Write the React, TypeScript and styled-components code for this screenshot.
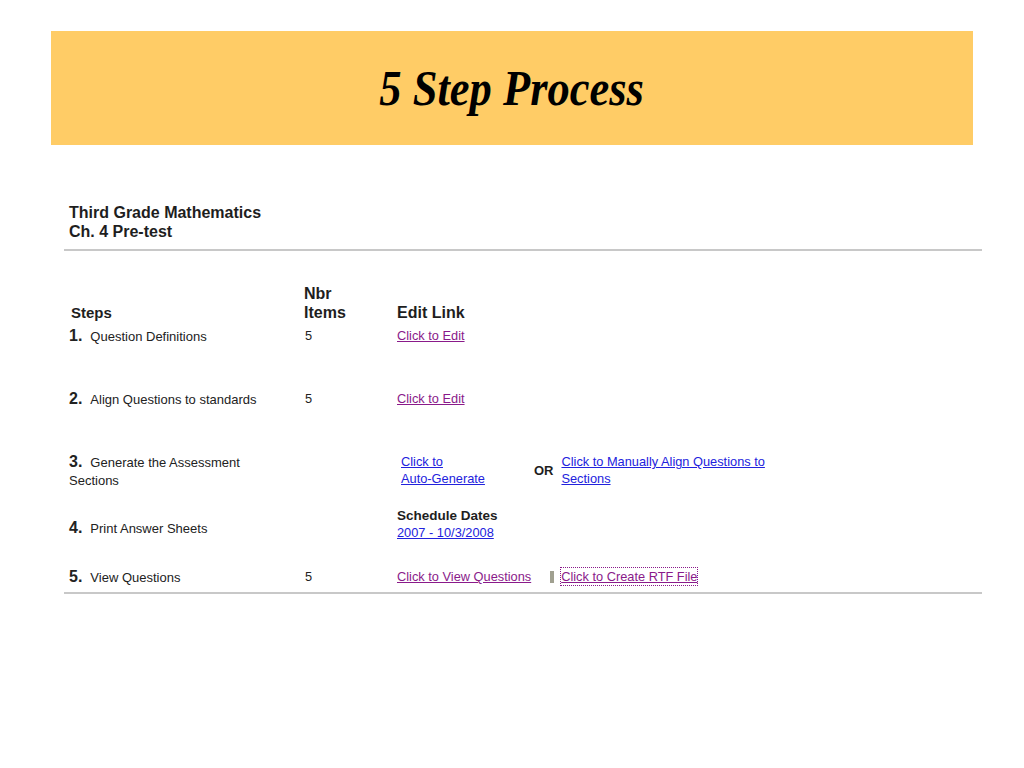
import React from "react";
import styled, { createGlobalStyle } from "styled-components";

const GlobalStyle = createGlobalStyle`
  body {
    margin: 0;
    background: #ffffff;
    font-family: "Liberation Sans", Arial, sans-serif;
    color: #222222;
  }
`;

const Banner = styled.div`
  margin: 31px 0 0 51px;
  width: 922px;
  height: 114px;
  background-color: #ffcc66;
  display: flex;
  align-items: center;
  justify-content: center;
`;

const BannerTitle = styled.h1`
  margin: 0;
  font-family: "Liberation Serif", "Times New Roman", serif;
  font-style: italic;
  font-weight: bold;
  font-size: 50px;
  color: #000000;
  transform: scaleX(0.89);
`;

const Content = styled.div`
  margin: 58px 0 0 64px;
  width: 918px;
`;

const TestTitle = styled.div`
  padding-left: 5px;
  font-size: 16px;
  font-weight: bold;
  line-height: 19px;
  color: #1e1e1e;
`;

const Rule = styled.div<{ $top: number }>`
  height: 2px;
  background-color: #c8c8c8;
  margin-top: ${(p) => p.$top}px;
`;

const Row = styled.div<{ $height: number }>`
  display: grid;
  grid-template-columns: 235px 93px 1fr;
  align-items: start;
  height: ${(p) => p.$height}px;
  padding-left: 5px;
  font-size: 12.8px;
  line-height: 17px;
`;

const HeadRow = styled(Row)`
  align-items: end;
  padding-bottom: 5px;
  font-size: 16px;
  font-weight: bold;
  line-height: 19px;
  color: #1e1e1e;
`;

const StepsHead = styled.div`
  font-size: 15px;
  padding-left: 2px;
`;

const StepCell = styled.div<{ $pad?: number }>`
  width: 200px;
  font-size: 13px;
  line-height: 18px;
  padding-top: ${(p) => p.$pad || 0}px;
`;

const StepLine = styled.div`
  display: flex;
  align-items: baseline;
`;

const StepNum = styled.span`
  font-size: 16px;
  font-weight: bold;
  margin-right: 8px;
`;

const Count = styled.div`
  padding-left: 1px;
`;

const LinkCell = styled.div<{ $indent?: number }>`
  display: flex;
  align-items: center;
  padding-left: ${(p) => p.$indent || 0}px;
`;

const Link = styled.a<{ $visited?: boolean; $focus?: boolean }>`
  color: ${(p) => (p.$visited ? "#8a1a8a" : "#2222dd")};
  text-decoration: underline;
  cursor: pointer;
  outline: ${(p) => (p.$focus ? "1px dotted #8a1a8a" : "none")};
`;

const Or = styled.span`
  font-weight: bold;
  font-size: 13px;
  margin: 0 8px 0 49px;
  color: #1e1e1e;
`;

const Stack = styled.div`
  display: flex;
  flex-direction: column;
`;

const DatesLabel = styled.span`
  font-weight: bold;
  font-size: 13.5px;
  color: #1e1e1e;
`;

const Divider = styled.span`
  display: inline-block;
  width: 4px;
  height: 12px;
  background-color: #a0a090;
  margin: 0 7px 0 19px;
`;

export default function App() {
  return (
    <>
      <GlobalStyle />
      <Banner>
        <BannerTitle>5 Step Process</BannerTitle>
      </Banner>
      <Content>
        <TestTitle>
          Third Grade Mathematics
          <br />
          Ch. 4 Pre-test
        </TestTitle>
        <Rule $top={8} />
        <HeadRow $height={71}>
          <StepsHead>Steps</StepsHead>
          <div>
            Nbr
            <br />
            Items
          </div>
          <div>Edit Link</div>
        </HeadRow>
        <Row $height={63}>
          <StepCell>
            <StepLine>
              <StepNum>1.</StepNum>Question Definitions
            </StepLine>
          </StepCell>
          <Count>5</Count>
          <LinkCell>
            <Link $visited>Click to Edit</Link>
          </LinkCell>
        </Row>
        <Row $height={63}>
          <StepCell>
            <StepLine>
              <StepNum>2.</StepNum>Align Questions to standards
            </StepLine>
          </StepCell>
          <Count>5</Count>
          <LinkCell>
            <Link $visited>Click to Edit</Link>
          </LinkCell>
        </Row>
        <Row $height={54}>
          <StepCell>
            <StepLine>
              <StepNum>3.</StepNum>Generate the Assessment
            </StepLine>
            Sections
          </StepCell>
          <Count />
          <LinkCell $indent={4}>
            <Stack>
              <Link>Click to</Link>
              <Link>Auto-Generate</Link>
            </Stack>
            <Or>OR</Or>
            <Stack>
              <Link>Click to Manually Align Questions to</Link>
              <Link>Sections</Link>
            </Stack>
          </LinkCell>
        </Row>
        <Row $height={61}>
          <StepCell $pad={12}>
            <StepLine>
              <StepNum>4.</StepNum>Print Answer Sheets
            </StepLine>
          </StepCell>
          <Count />
          <Stack>
            <DatesLabel>Schedule Dates</DatesLabel>
            <Link>2007 - 10/3/2008</Link>
          </Stack>
        </Row>
        <Row $height={24}>
          <StepCell>
            <StepLine>
              <StepNum>5.</StepNum>View Questions
            </StepLine>
          </StepCell>
          <Count>5</Count>
          <LinkCell>
            <Link $visited>Click to View Questions</Link>
            <Divider />
            <Link $visited $focus>
              Click to Create RTF File
            </Link>
          </LinkCell>
        </Row>
        <Rule $top={0} />
      </Content>
    </>
  );
}
